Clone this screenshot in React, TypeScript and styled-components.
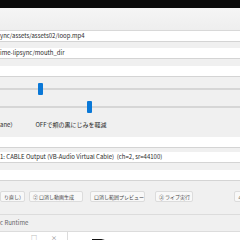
import React from "react";
import styled, { createGlobalStyle } from "styled-components";

const Global = createGlobalStyle`
  html, body { margin: 0; padding: 0; background: #f0f0f0; }
  body { width: 240px; height: 240px; overflow: hidden; font-family: "Noto Sans CJK JP", "Noto Sans", sans-serif; }
`;

const Page = styled.div`
  width: 240px;
  height: 240px;
  overflow: hidden;
  display: flex;
  flex-direction: column;
  background: #f0f0f0;
  color: #2a2a2a;
`;

const TitleBar = styled.div`
  flex: none;
  height: 8px;
  background: #0b0b0b;
`;

const Header = styled.div`
  flex: none;
  height: 22px;
  background: linear-gradient(#f5f5f5, #eeeeee);
  border-bottom: 1px solid #d8d8d8;
`;

const Field = styled.div<{ $mt?: number }>`
  flex: none;
  height: 10px;
  margin-top: ${(p) => p.$mt ?? 0}px;
  background: #fff;
  border-bottom: 1px solid #d4d4d4;
  font-size: 6px;
  line-height: 10px;
  white-space: nowrap;
  overflow: hidden;
`;

const SliderRow = styled.div<{ $mt: number }>`
  flex: none;
  position: relative;
  height: 12px;
  margin-top: ${(p) => p.$mt}px;
  display: flex;
  align-items: center;
`;

const Track = styled.div`
  flex: 1;
  height: 2px;
  background: #d6d6d6;
`;

const Thumb = styled.div`
  position: absolute;
  top: 0;
  width: 5px;
  height: 12px;
  border-radius: 1px;
  background: #0a78d7;
`;

const OptionRow = styled.div`
  flex: none;
  height: 12px;
  margin-top: 6px;
  display: flex;
  gap: 19px;
  font-size: 6px;
  line-height: 12px;
  white-space: nowrap;
`;

const Buttons = styled.div`
  flex: none;
  margin-top: 10px;
  height: 11px;
  display: flex;
  white-space: nowrap;
`;

const Btn = styled.div<{ $w: number; $ml: number }>`
  flex: none;
  width: ${(p) => p.$w}px;
  margin-left: ${(p) => p.$ml}px;
  height: 11px;
  box-sizing: border-box;
  border: 1px solid #dcdcdc;
  border-radius: 2px;
  background: #f8f8f8;
  font-size: 5px;
  line-height: 9px;
  padding-left: 3px;
  color: #444;
  overflow: hidden;
`;

const Divider = styled.div`
  flex: none;
  margin-top: 12px;
  height: 1px;
  background: #dcdcdc;
`;

const Section = styled.div`
  flex: none;
  height: 16px;
  font-size: 6px;
  line-height: 16px;
  color: #666;
  border-bottom: 1px solid #dcdcdc;
`;

const Bottom = styled.div`
  flex: 1;
  display: flex;
  background: #fff;
`;

const MiniWin = styled.div`
  flex: none;
  width: 68px;
  border-right: 1px solid #dcdcdc;
  display: flex;
  justify-content: flex-end;
  align-items: flex-start;
  gap: 14px;
  padding: 2px 10px 0 0;
  box-sizing: border-box;
  font-size: 6px;
  color: #777;
  line-height: 8px;
`;

const Canvas = styled.div`
  flex: 1;
`;

export default function App() {
  return (
    <Page>
      <Global />
      <TitleBar />
      <Header />
      <Field>ync/assets/assets02/loop.mp4</Field>
      <Field $mt={6}>ime-lipsync/mouth_dir</Field>
      <Field $mt={7} />
      <SliderRow $mt={6}>
        <Track />
        <Thumb style={{ left: 38 }} />
      </SliderRow>
      <SliderRow $mt={6}>
        <Track />
        <Thumb style={{ left: 87 }} />
      </SliderRow>
      <OptionRow>
        <span>ane）</span>
        <span>OFFで頬の黒にじみを軽減</span>
      </OptionRow>
      <Field $mt={6} />
      <Field $mt={4}>1: CABLE Output (VB-Audio Virtual Cable)&nbsp;&nbsp;(ch=2, sr=44100)</Field>
      <Field $mt={7} />
      <Buttons>
        <Btn $w={25} $ml={0}>り直し）</Btn>
        <Btn $w={54} $ml={4}>② 口消し動画生成</Btn>
        <Btn $w={55} $ml={7}>口消し範囲プレビュー</Btn>
        <Btn $w={38} $ml={10}>③ ライブ実行</Btn>
        <Btn $w={20} $ml={41}>キ</Btn>
      </Buttons>
      <Divider />
      <Section>c Runtime</Section>
      <Bottom>
        <MiniWin>
          <span>□</span>
          <span>×</span>
        </MiniWin>
        <Canvas>
          <svg width="172" height="12" viewBox="0 0 172 12">
            <path d="M24 0 C34 0 44 4 58 12" stroke="#111" strokeWidth="2.5" fill="none" />
          </svg>
        </Canvas>
      </Bottom>
    </Page>
  );
}
